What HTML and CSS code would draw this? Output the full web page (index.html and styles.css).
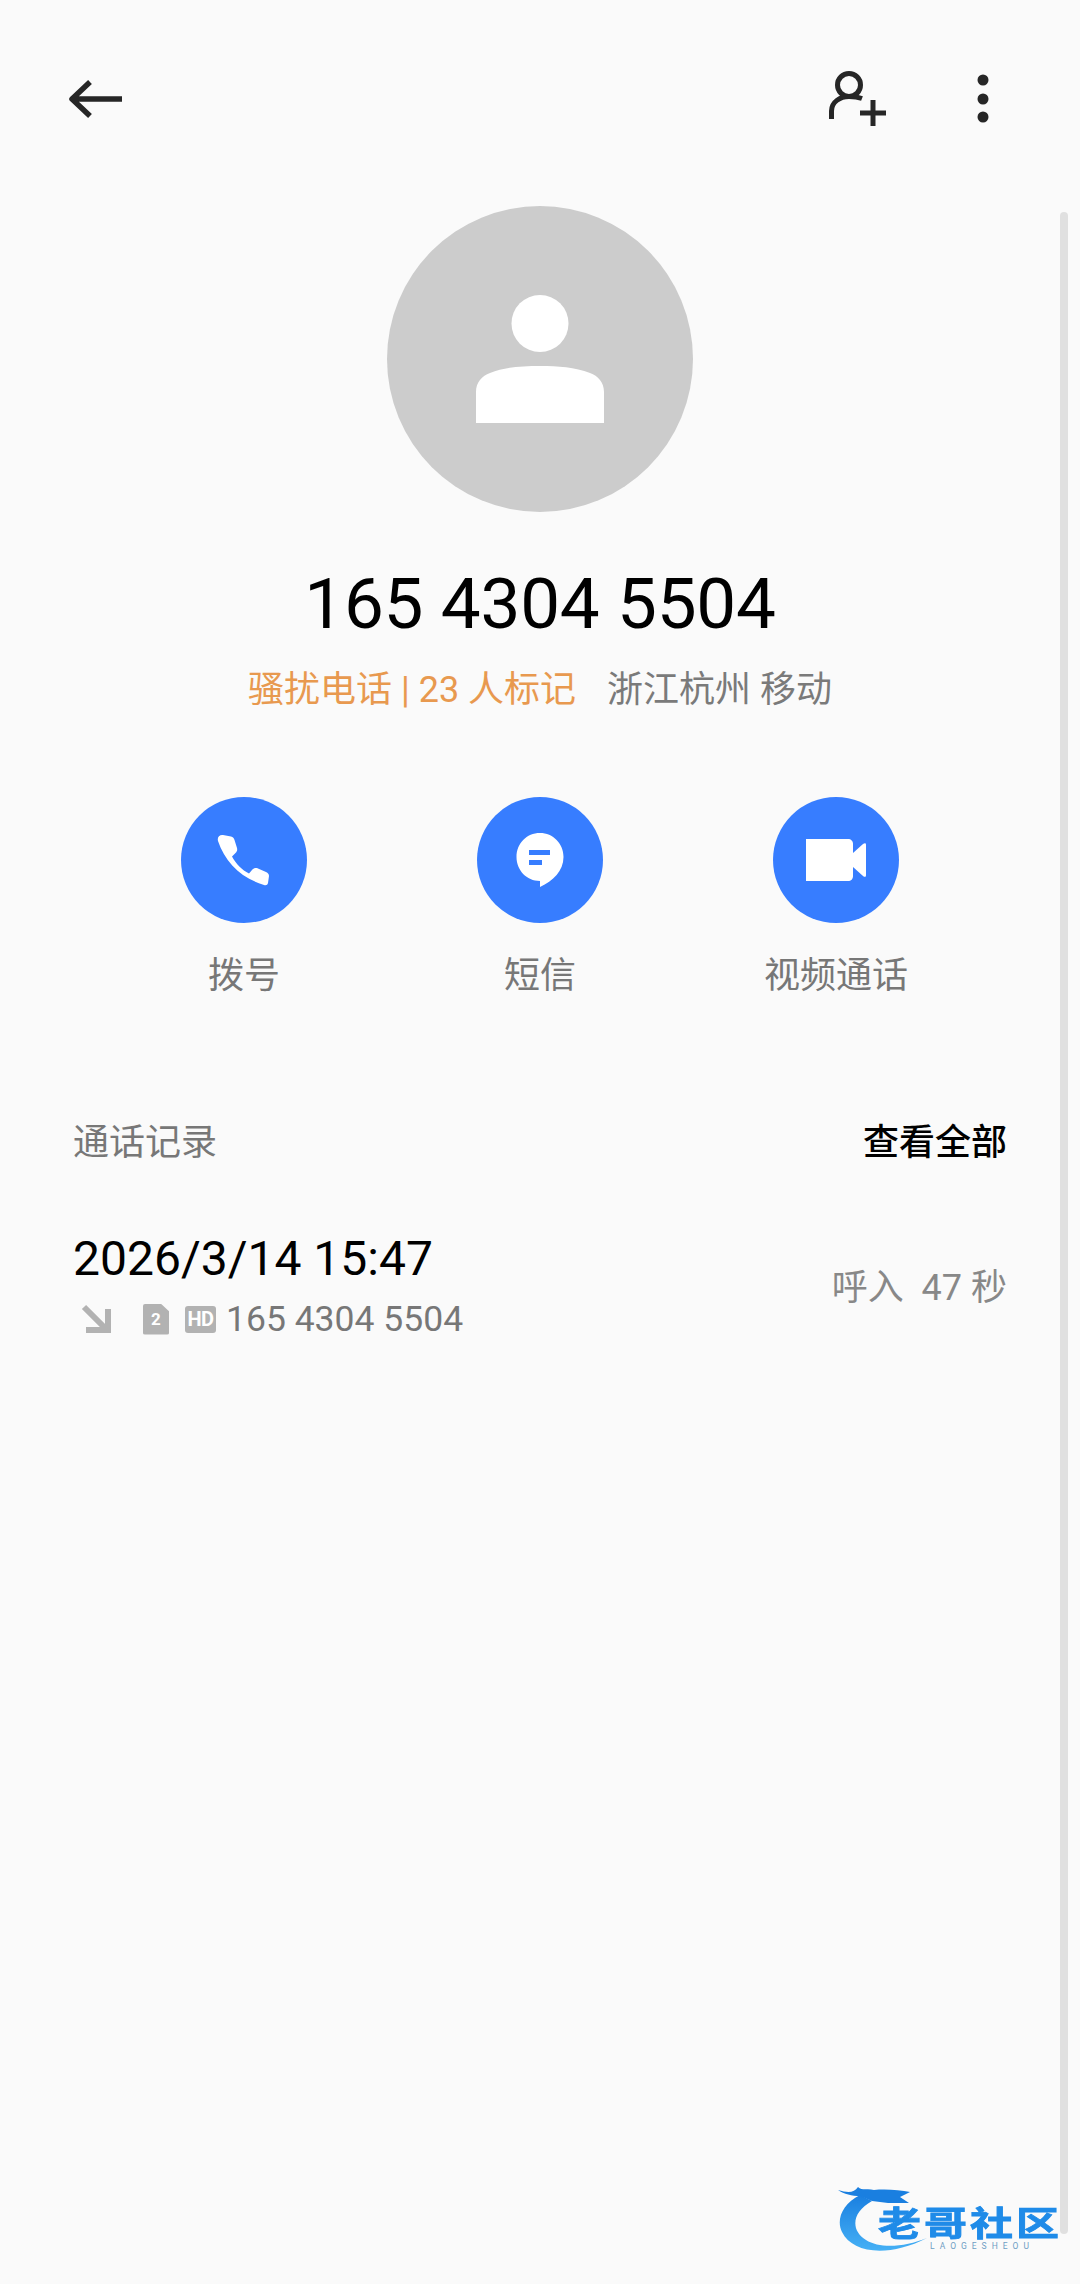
FILE: index.html
```html
<!DOCTYPE html>
<html lang="zh-CN">
<head>
  <meta charset="UTF-8">
  <meta name="viewport" content="width=device-width, initial-scale=1">
  <title>165 4304 5504</title>
  <link rel="stylesheet" href="styles.css">
</head>
<body>
  <div class="page">
    <div class="topbar">
      <svg class="icon" viewBox="0 0 60 60"><path d="M24 13 L6 30 L24 47 M6 30 H56" fill="none" stroke="#262626" stroke-width="5.5" stroke-linejoin="round"/></svg>
      <div class="topbar-right">
        <svg class="icon" viewBox="0 0 60 60"><circle cx="23" cy="16" r="11.5" fill="none" stroke="#262626" stroke-width="5"/><path d="M5.5 50 V42 C5.500 33 14 27.500 23 27.500 C28 27.500 32 28 36 29.500 M34 44 H60 M47 31 V57" fill="none" stroke="#262626" stroke-width="5"/></svg>
        <svg class="icon-more" viewBox="0 0 20 60"><circle cx="10" cy="11" r="5.500" fill="#262626"/><circle cx="10" cy="30" r="5.500" fill="#262626"/><circle cx="10" cy="48" r="5.500" fill="#262626"/></svg>
      </div>
    </div>

    <div class="avatar">
      <svg viewBox="0 0 306 306" width="306" height="306"><circle cx="153" cy="117.500" r="28.500" fill="#fff"/><path d="M89 217 V186 C89 176 95 170 103 167 C118 161 135 160 153 160 C171 160 188 161 203 167 C211 170 217 176 217 186 V217 Z" fill="#fff"/></svg>
    </div>

    <h1 class="number">165 4304 5504</h1>
    <p class="tag-line"><span class="tag-spam">骚扰电话 | 23 人标记</span><span class="tag-area">浙江杭州 移动</span></p>

    <div class="actions">
      <div class="action">
        <div class="action-btn">
          <svg viewBox="0 0 126 126" width="126" height="126"><path d="M42 38 L50 39.500 C52 40 53 41 53.500 43 L56 51 C56.500 53 56 54.500 54.500 56 L51 59.500 C55 67 61 73 68 76.500 L71 73 C73 71 75 70.500 77 71.500 L85 75 C87 76 88 77 88 79 L87 86 C86.500 88 85 88.700 83 88 C60 81 44 65 37 44 C36 40 38.500 37.500 42 38 Z" fill="#fff"/></svg>
        </div>
        <span class="action-label">拨号</span>
      </div>
      <div class="action">
        <div class="action-btn">
          <svg viewBox="0 0 126 126" width="126" height="126"><path d="M63 36 C76 36 86.500 46.500 86.500 60 C86.500 74 76 84 63 90 V84 C49.500 84 39.500 73 39.500 60 C39.500 46.500 49.500 36 63 36 Z" fill="#fff"/><path d="M52 53 H73 V58 H52 Z M52 63 H65 V68 H52 Z" fill="#377dff"/></svg>
        </div>
        <span class="action-label">短信</span>
      </div>
      <div class="action">
        <div class="action-btn">
          <svg viewBox="0 0 126 126" width="126" height="126"><path d="M33 42 H75 C78 42 80 44 80 47 V79 C80 82 78 84 75 84 H33 Z" fill="#fff"/><path d="M80 56 L90 47 C92 45.500 93 46 93 48 V78 C93 80 92 80.500 90 79 L80 70 Z" fill="#fff"/></svg>
        </div>
        <span class="action-label">视频通话</span>
      </div>
    </div>

    <div class="section-head">
      <span class="section-title">通话记录</span>
      <span class="section-link">查看全部</span>
    </div>

    <div class="call-row">
      <div class="call-main">
        <div class="call-time">2026/3/14 15:47</div>
        <div class="call-meta">
          <svg class="meta-arrow" viewBox="0 0 30 30"><path d="M3 3 L25 25 M5 26 H27 V5" fill="none" stroke="#b2b2b2" stroke-width="6"/></svg>
          <span class="sim-badge">2</span>
          <span class="hd-badge">HD</span>
          <span class="call-number">165 4304 5504</span>
        </div>
      </div>
      <div class="call-info">呼入&nbsp; 47 秒</div>
    </div>

    <div class="scrollbar"></div>

    <div class="watermark">
      <svg class="wm-dragon" viewBox="0 0 270 124" width="270" height="124">
        <defs><linearGradient id="wm" x1="0" y1="0" x2="0" y2="1"><stop offset="0" stop-color="#1a7fe0"/><stop offset="1" stop-color="#45b0f5"/></linearGradient></defs>
        <path d="M50 35 C32 44 26 60 32 72 C42 93 78 98 117 78 C95 87 70 89 56 80 C40 70 42 52 62 41 Z" fill="url(#wm)"/>
        <path d="M28 30 C38 33 44 33 48 27 C52 31 58 28 64 30 C76 29 90 30 100 32 L90 37 L99 43 L78 43 L62 41 L50 36 C42 36 34 34 28 30 Z" fill="#1a7fe0"/>
      </svg>
      <div class="wm-name">老哥社区</div>
      <div class="wm-sub">LAOGESHEOU</div>
    </div>
  </div>
</body>
</html>
```
FILE: styles.css
```css
* {
  box-sizing: border-box;
}
body {
  margin: 0;
  background-color: #fafafa;
  font-family: Roboto, "Noto Sans CJK SC", sans-serif;
}
.page {
  position: relative;
  width: 1080px;
  height: 2284px;
  overflow: hidden;
}
.topbar {
  display: flex;
  justify-content: space-between;
  height: 206px;
  padding: 69px 87px 0 66px;
}
.topbar-right {
  display: flex;
  gap: 87px;
  margin-left: auto;
}
.icon {
  width: 60px;
  height: 60px;
}
.icon-more {
  width: 20px;
  height: 60px;
}
.avatar {
  width: 306px;
  height: 306px;
  margin: 0 auto;
  border-radius: 50%;
  background-color: #ccc;
}
.avatar svg,
.action-btn svg {
  display: block;
}
.number {
  margin: 50px 0 0;
  font-size: 71px;
  font-weight: 400;
  line-height: 84px;
  letter-spacing: -0.200px;
  text-align: center;
  color: #000;
}
.tag-line {
  display: flex;
  justify-content: center;
  gap: 31px;
  margin: 20px 0 0;
  font-size: 36px;
  line-height: 48px;
}
.tag-spam {
  color: #e8994f;
}
.tag-area {
  color: #7a7a7a;
}
.actions {
  display: flex;
  justify-content: center;
  gap: 170px;
  margin-top: 83px;
}
.action {
  display: flex;
  flex-direction: column;
  align-items: center;
  width: 126px;
}
.action-btn {
  width: 126px;
  height: 126px;
  border-radius: 50%;
  background-color: #377dff;
}
.action-label {
  margin-top: 29px;
  font-size: 36px;
  line-height: 48px;
  white-space: nowrap;
  color: #777;
}
.section-head {
  display: flex;
  justify-content: space-between;
  align-items: center;
  margin-top: 119px;
  padding: 0 73px;
  font-size: 36px;
  line-height: 48px;
}
.section-title {
  color: #777;
}
.section-link {
  color: #000;
  font-weight: 500;
}
.call-row {
  display: flex;
  justify-content: space-between;
  align-items: center;
  margin-top: 64px;
  padding: 0 73px;
}
.call-time {
  font-size: 48px;
  line-height: 56px;
  color: #000;
}
.call-meta {
  display: flex;
  align-items: center;
  height: 44px;
  margin-top: 10px;
  font-size: 35.500px;
  color: #777;
}
.meta-arrow {
  width: 30px;
  height: 30px;
  margin-left: 8px;
}
.sim-badge {
  display: flex;
  justify-content: center;
  align-items: center;
  width: 26px;
  height: 31px;
  margin-left: 32px;
  border-radius: 2px;
  background-color: #b2b2b2;
  clip-path: polygon(0 0, 68% 0, 100% 25%, 100% 100%, 0 100%);
  font-size: 17px;
  font-weight: 700;
  color: #fff;
}
.hd-badge {
  display: flex;
  justify-content: center;
  align-items: center;
  width: 31px;
  height: 27px;
  margin-left: 16px;
  border-radius: 3px;
  background-color: #b2b2b2;
  font-size: 20px;
  font-weight: 700;
  letter-spacing: -0.500px;
  color: #fff;
}
.call-number {
  margin-left: 10px;
}
.call-info {
  margin-bottom: 5px;
  font-size: 36px;
  color: #888;
}
.scrollbar {
  position: absolute;
  top: 212px;
  left: 1060px;
  width: 8px;
  height: 2022px;
  border-radius: 4px;
  background-color: #e0e0e0;
}
.watermark {
  position: absolute;
  top: 2160px;
  left: 810px;
  width: 270px;
  height: 124px;
}
.wm-dragon {
  display: block;
  filter: blur(0.6px);
}
.wm-name {
  position: absolute;
  top: 48px;
  left: 68px;
  width: 190px;
  font-size: 43px;
  font-weight: 700;
  line-height: 32px;
  letter-spacing: 3px;
  white-space: nowrap;
  transform: scaleY(0.8);
  color: #1f8be8;
  -webkit-text-stroke: 1px #1f8be8;
  filter: blur(0.5px);
}
.wm-sub {
  position: absolute;
  top: 81px;
  left: 120px;
  font-size: 8.500px;
  line-height: 10px;
  letter-spacing: 5px;
  white-space: nowrap;
  color: #6f9ec4;
}
```
